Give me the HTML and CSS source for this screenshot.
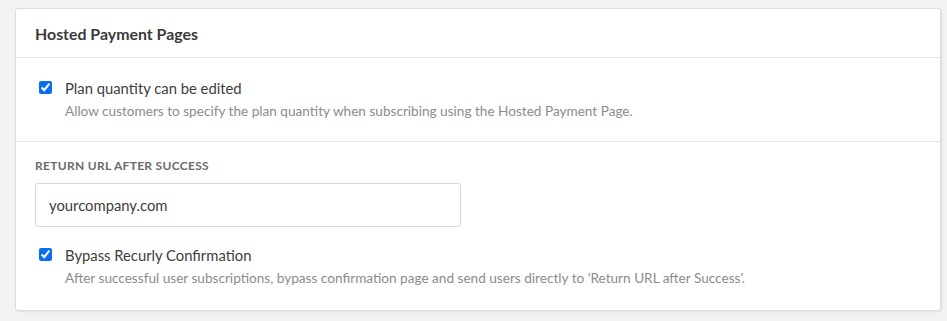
FILE: index.html
```html
<!DOCTYPE html>
<html>

<head>
    <meta charset="UTF-8">
    <meta name="viewport" content="width=device-width, initial-scale=1.0">
    <title>Hosted Payment Pages</title>
    <link rel="stylesheet" href="styles.css">
</head>

<body>
    <div class="card">
        <div class="card-header">
            <h2>Hosted Payment Pages</h2>
        </div>

        <div class="section">
            <label class="check">
                <input type="checkbox" checked>
                <span class="check-text">
                    <span class="check-title">Plan quantity can be edited</span>
                    <span class="check-desc">Allow customers to specify the plan quantity when subscribing using the Hosted Payment Page.</span>
                </span>
            </label>
        </div>

        <div class="section section-url">
            <label class="field-label" for="return_url">Return URL after success</label>
            <input class="text-input" id="return_url" type="text" value="yourcompany.com">

            <label class="check">
                <input type="checkbox" checked>
                <span class="check-text">
                    <span class="check-title">Bypass Recurly Confirmation</span>
                    <span class="check-desc">After successful user subscriptions, bypass confirmation page and send users directly to 'Return URL after Success'.</span>
                </span>
            </label>
        </div>
    </div>
</body>

</html>
```

FILE: styles.css
```css
body {
    margin: 0;
    padding: 8px 6px 9px 15px;
    background-color: #f2f2f2;
    font-family: Lato, "Open Sans", sans-serif;
    color: #444;
}

.card {
    background-color: #fff;
    border: 1px solid #ddd;
    border-radius: 3px;
    box-shadow: 1px 1px 2px rgba(0, 0, 0, 0.08);
}

.card-header {
    height: 48px;
    display: flex;
    align-items: center;
    padding: 0 19px;
    border-bottom: 1px solid #e3e3e3;
}

.card-header h2 {
    margin: 0;
    font-size: 15.9px;
    font-weight: 700;
    color: #3a3a3a;
}

.section {
    padding: 22px 19px 22px;
}

.section + .section {
    border-top: 1px solid #e3e3e3;
}

.section-url {
    padding-top: 17px;
    padding-bottom: 24px;
}

/* checkbox + two lines of text */
.check {
    display: flex;
    align-items: flex-start;
    cursor: pointer;
}

.check input {
    width: 13px;
    height: 13px;
    margin: 1px 13px 0 4px;
    accent-color: #0a6cf2;
    flex-shrink: 0;
}

.check-text {
    display: flex;
    flex-direction: column;
}

.check-title {
    font-size: 14.8px;
    line-height: 16px;
    color: #3d3d3d;
}

.check-desc {
    margin-top: 7px;
    font-size: 13.6px;
    line-height: 16px;
    color: #8c8c8c;
}

.field-label {
    display: block;
    font-size: 12px;
    font-weight: 700;
    letter-spacing: 0.3px;
    text-transform: uppercase;
    color: #6b6b6b;
    line-height: 14px;
}

.text-input {
    display: block;
    box-sizing: border-box;
    width: 426px;
    height: 44px;
    margin: 10px 0 20px;
    padding: 0 13px;
    border: 1px solid #d8d8d8;
    border-radius: 3px;
    font-family: inherit;
    font-size: 14.8px;
    color: #3d3d3d;
}
```
